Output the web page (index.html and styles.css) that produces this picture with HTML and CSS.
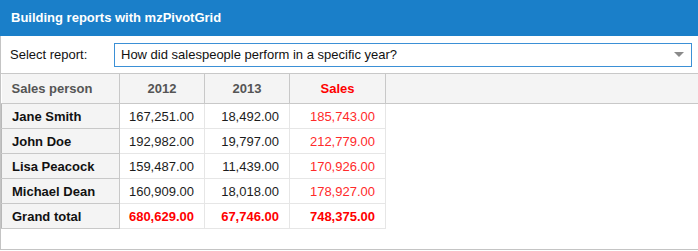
FILE: index.html
```html
<!DOCTYPE html>
<html lang="en">
  <head>
    <meta charset="UTF-8" />
    <title>mzPivotGrid</title>
    <link rel="stylesheet" href="styles.css">
  </head>
  <body>
    <div class="panel">
      <div class="titel">Building reports with mzPivotGrid</div>
      <div class="krop">
        <div class="vaelg">
          <label>Select report:</label>
          <div class="boks">
            <span>How did salespeople perform in a specific year?</span>
            <span class="pil"></span>
          </div>
        </div>
        <div class="gitter">
          <table>
            <colgroup>
              <col class="k1" />
              <col class="k2" />
              <col class="k2" />
              <col class="k3" />
              <col />
            </colgroup>
            <thead>
              <tr>
                <th class="navn">Sales person</th>
                <th>2012</th>
                <th>2013</th>
                <th class="rod">Sales</th>
                <th class="tom"></th>
              </tr>
            </thead>
            <tbody>
              <tr><th>Jane Smith</th><td>167,251.00</td><td>18,492.00</td><td class="rod">185,743.00</td></tr>
              <tr><th>John Doe</th><td>192,982.00</td><td>19,797.00</td><td class="rod">212,779.00</td></tr>
              <tr><th>Lisa Peacock</th><td>159,487.00</td><td>11,439.00</td><td class="rod">170,926.00</td></tr>
              <tr><th>Michael Dean</th><td>160,909.00</td><td>18,018.00</td><td class="rod">178,927.00</td></tr>
              <tr class="total"><th>Grand total</th><td>680,629.00</td><td>67,746.00</td><td>748,375.00</td></tr>
            </tbody>
          </table>
        </div>
      </div>
    </div>
  </body>
</html>
```

FILE: styles.css
```css
body {
  margin: 0;
  font-family: "Liberation Sans", Arial, sans-serif;
  font-size: 13px;
  color: #111;
}
.panel {
  width: 698px;
}
.titel {
  height: 36px;
  line-height: 36px;
  background-color: #1a7fc9;
  color: white;
  font-weight: bold;
  font-size: 13px;
  padding-left: 11px;
}
.krop {
  height: 213px;
  border-left: 1px solid #c4c4c4;
  border-bottom: 1px solid #c4c4c4;
}
.vaelg {
  display: flex;
  align-items: center;
  height: 37px;
  padding-left: 9px;
}
.vaelg label {
  width: 104px;
}
.boks {
  width: 564px;
  height: 22px;
  border: 1px solid #3b90d6;
  display: flex;
  align-items: center;
  justify-content: space-between;
  padding: 0 6px;
}
.pil {
  width: 0;
  height: 0;
  border-left: 5px solid transparent;
  border-right: 5px solid transparent;
  border-top: 5px solid #8a8a8a;
  margin-right: 1px;
}
.gitter {
  border-top: 1px solid #c8c8c8;
}
table {
  border-collapse: collapse;
  table-layout: fixed;
  width: 697px;
}
.k1 {
  width: 118px;
}
.k2 {
  width: 85px;
}
.k3 {
  width: 96px;
}
th,
td {
  box-sizing: border-box;
}
thead th {
  height: 29px;
  background-color: #f4f4f4;
  border-right: 1px solid #c8c8c8;
  border-bottom: 1px solid #c8c8c8;
  color: #555;
  font-weight: bold;
  text-align: center;
  padding: 0;
}
thead th.navn {
  text-align: left;
  padding-left: 10px;
}
thead th.tom {
  border-right: none;
}
tbody th {
  height: 25px;
  background-color: #f4f4f4;
  border: 1px solid #c8c8c8;
  border-left-color: #b8b8b8;
  text-align: left;
  padding: 1px 0 0 10px;
  color: #111;
}
tbody td {
  border: 1px solid #e6e6e6;
  text-align: right;
  padding: 1px 10px 0 0;
  color: #1c1c1c;
}
tbody tr:first-child th,
tbody tr:first-child td {
  border-top: none;
}
.rod {
  color: #ff0000;
}
tbody td.rod {
  color: #ff2a2a;
}
.total td {
  color: #ff0000;
  font-weight: bold;
}
```
